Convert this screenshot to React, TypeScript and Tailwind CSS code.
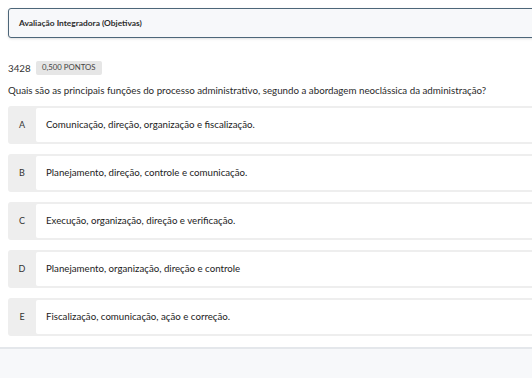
import React from 'react';

const OPTIONS = [
  { letter: 'A', text: 'Comunicação, direção, organização e fiscalização.' },
  { letter: 'B', text: 'Planejamento, direção, controle e comunicação.' },
  { letter: 'C', text: 'Execução, organização, direção e verificação.' },
  { letter: 'D', text: 'Planejamento, organização, direção e controle' },
  { letter: 'E', text: 'Fiscalização, comunicação, ação e correção.' },
];

export default function App() {
  return (
    <div className="w-[532px] h-[378px] overflow-hidden bg-white text-[#333] flex flex-col" style={{ fontFamily: 'Lato, "Open Sans", sans-serif' }}>
      <div className="pl-2 pt-2">
        <div className="h-[30px] w-[540px] flex items-center pl-[10px] bg-[#f7f8fa] border border-[#4d6679] rounded-l-[3px] shadow-sm">
          <span className="text-[8.4px] font-bold text-[#2c2c2c]">Avaliação Integradora (Objetivas)</span>
        </div>
      </div>

      <div className="pl-2 pt-[23px]">
        <div className="flex items-center gap-[5px] h-[14px]">
          <span className="text-[9.8px] text-[#333]">3428</span>
          <span className="h-[14px] w-[66px] flex items-center justify-center bg-[#e6e6e6] rounded-[2px] text-[7.8px] text-[#444]">0,500 PONTOS</span>
        </div>
        <p className="mt-[8px] text-[9.75px] leading-[14px] text-[#2a2a2a]">
          Quais são as principais funções do processo administrativo, segundo a abordagem neoclássica da administração?
        </p>

        <div className="mt-[9px] flex flex-col gap-[10px]">
          {OPTIONS.map(o => (
            <div key={o.letter} className="h-[38px] w-[540px] flex bg-[#eeeeee] rounded-[3px] p-[2px] pl-0">
              <div className="w-[28px] flex items-center justify-center text-[9px] text-[#333]">{o.letter}</div>
              <div className="flex-1 bg-white rounded-[2px] flex items-center pl-[10px] pb-[2px] text-[9.7px] text-[#222]">{o.text}</div>
            </div>
          ))}
        </div>
      </div>

      <div className="mt-[11px] flex-1 border-t-2 border-[#e4e7eb] bg-[#f7f8fa]" />
    </div>
  );
}
